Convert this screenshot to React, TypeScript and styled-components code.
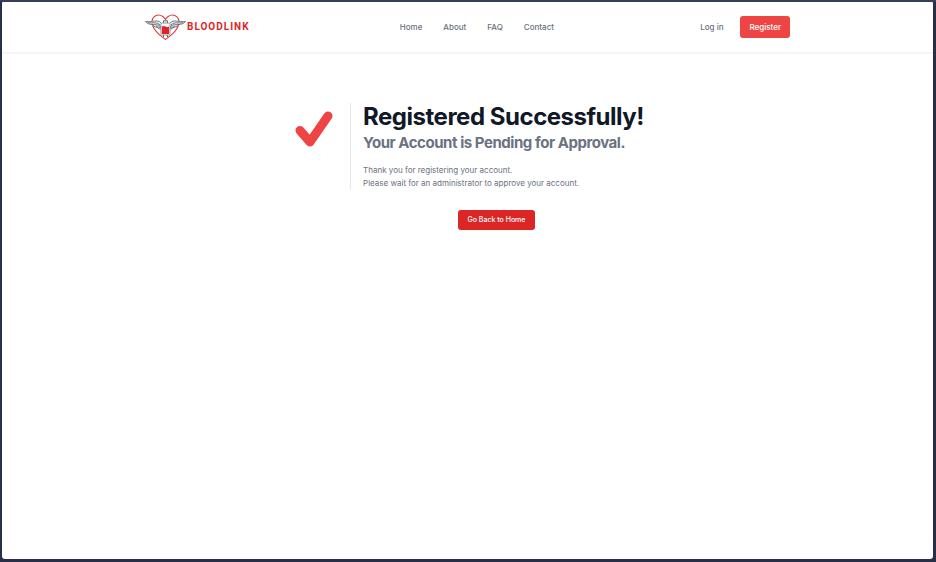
import React from "react";
import styled, { createGlobalStyle } from "styled-components";

const GlobalStyle = createGlobalStyle`
  *, *::before, *::after { box-sizing: border-box; }
  body {
    margin: 0;
    background: #282f48;
    font-family: Inter, "Liberation Sans", sans-serif;
    color: #6b7280;
  }
  h1, h2, p { margin: 0; }
`;

const Frame = styled.div`
  display: flex;
  min-height: 100vh;
  padding: 2px 3px 3px 2px;
  background: linear-gradient(#383e54 0, #383e54 2px, #282f48 2px);
`;

const Page = styled.div`
  flex: 1;
  border-radius: 1px 1px 3px 3px;
  background: #ffffff;
`;

const Header = styled.header`
  border-bottom: 1px solid #f3f4f6;
  box-shadow: 0 1px 1px rgba(0, 0, 0, 0.03);
`;

const Bar = styled.div`
  display: flex;
  align-items: center;
  justify-content: space-between;
  max-width: 645px;
  min-height: 50px;
  margin: 0 auto;
`;

const Brand = styled.a`
  display: flex;
  align-items: center;
  gap: 1px;
  padding-right: 4px;
  color: #dc2626;
  font-family: Roboto, sans-serif;
  font-size: 10px;
  font-weight: 700;
  line-height: 12px;
  letter-spacing: 1px;
  text-decoration: none;
`;

const Nav = styled.nav`
  display: flex;
  gap: 21px;
`;

const NavLink = styled.a`
  color: #6b7280;
  font-size: 8px;
  font-weight: 500;
  line-height: 12px;
  text-decoration: none;
`;

const Account = styled.div`
  display: flex;
  align-items: center;
  gap: 17px;
`;

const Button = styled.button<{ $tone: string; $size: "regular" | "small" }>`
  padding: ${({ $size }) => ($size === "regular" ? "5px 9px" : "4px 10px")};
  border: 0;
  border-radius: 3px;
  background: ${({ $tone }) => $tone};
  color: #ffffff;
  font: 500 ${({ $size }) => ($size === "regular" ? "8px" : "7px")} / 12px Inter, sans-serif;
  cursor: pointer;
`;

const Main = styled.main`
  display: flex;
  flex-direction: column;
  align-items: center;
  padding: 50px 16px 48px 20px;
`;

const Notice = styled.section`
  display: flex;
  gap: 17px;
`;

const Tick = styled.svg`
  width: 38px;
  height: 38px;
  margin-top: 7px;
`;

const Message = styled.div`
  padding-left: 12px;
  border-left: 1px solid #e5e7eb;
`;

const Title = styled.h1`
  color: #111827;
  font-size: 24px;
  font-weight: 700;
  line-height: 27px;
  letter-spacing: -0.02em;
`;

const Subtitle = styled.h2`
  font-size: 15px;
  font-weight: 700;
  line-height: 25px;
  letter-spacing: -0.03em;
`;

const Details = styled.p`
  margin-top: 9px;
  font-size: 8px;
  line-height: 13px;
`;

const Actions = styled.div`
  margin: 20px 0 0 54px;
  line-height: 0;
`;

const BrandMark = () => (
  <svg width="41" height="27" viewBox="0 0 41 27" fill="none" aria-hidden="true">
    <path
      d="M20.5 25.5C17 23 7.5 17 7 8.5C6.8 2 13.5-.8 17.8 2.5C19.4 3.7 20.5 5.5 20.5 5.5C20.5 5.5 21.6 3.7 23.2 2.5C27.5-.8 34.2 2 34 8.5C33.5 17 24 23 20.5 25.5Z"
      stroke="#e23b3f"
      strokeWidth="1.1"
    />
    <g stroke="#555b60" strokeWidth=".8">
      <path d="M16 9C12 4.8 8 8.5 .5 7.5C2.5 10 5 10.4 7 10.4C8 12 10 13 12 13C13 14.5 14.5 15 16 15" fill="#ecefef" />
      <path d="M3 8.7C8 9.4 11 7.5 15 11M7 10.4C10 11 12 10 16 12.5M11 12.8L16 13.5" />
    </g>
    <g stroke="#555b60" strokeWidth=".8">
      <path d="M25 9C29 4.8 33 8.5 40.5 7.5C38.5 10 36 10.4 34 10.4C33 12 31 13 29 13C28 14.5 26.5 15 25 15" fill="#ecefef" />
      <path d="M38 8.7C33 9.4 30 7.5 26 11M34 10.4C31 11 29 10 25 12.5M30 12.8L25 13.5" />
    </g>
    <path d="M18.5 9V6.8H22.5V9M18.5 21V23M22.5 21V23" stroke="#5f6468" />
    <rect x="16" y="9" width="9" height="12" rx="1.4" fill="#fff" stroke="#8b8f93" />
    <path d="M17 12.5Q19 11.5 20.5 12.5T24 12.5V20H17Z" fill="#e32127" />
  </svg>
);

const links = ["Home", "About", "FAQ", "Contact"];

export default function App() {
  return (
    <>
      <GlobalStyle />
      <Frame>
        <Page>
          <Header>
            <Bar>
              <Brand href="#home">
                <BrandMark />
                BLOODLINK
              </Brand>
              <Nav aria-label="Main">
                {links.map((label) => (
                  <NavLink key={label} href={`#${label.toLowerCase()}`}>
                    {label}
                  </NavLink>
                ))}
              </Nav>
              <Account>
                <NavLink href="#login">Log in</NavLink>
                <Button type="button" $tone="#ef4444" $size="regular">
                  Register
                </Button>
              </Account>
            </Bar>
          </Header>
          <Main>
            <Notice>
              <Tick viewBox="0 0 38 38" fill="none" aria-hidden="true">
                <path
                  d="M5 20.5L15 32L33 6"
                  stroke="#ef4444"
                  strokeWidth="9"
                  strokeLinecap="round"
                  strokeLinejoin="round"
                />
              </Tick>
              <Message>
                <Title>Registered Successfully!</Title>
                <Subtitle>Your Account is Pending for Approval.</Subtitle>
                <Details>
                  Thank you for registering your account.
                  <br />
                  Please wait for an administrator to approve your account.
                </Details>
              </Message>
            </Notice>
            <Actions>
              <Button type="button" $tone="#dc2626" $size="small">
                Go Back to Home
              </Button>
            </Actions>
          </Main>
        </Page>
      </Frame>
    </>
  );
}
